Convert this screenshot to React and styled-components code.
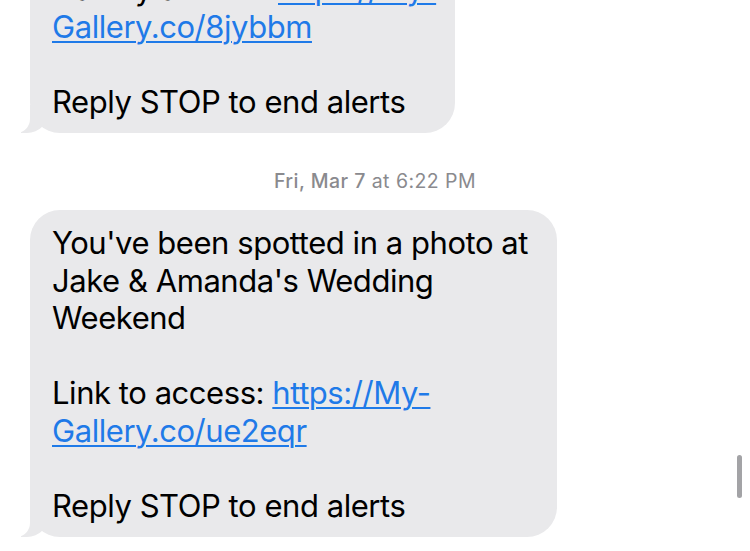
import React from "react";
import styled, { createGlobalStyle } from "styled-components";

const Global = createGlobalStyle`
  html, body {
    margin: 0;
    padding: 0;
    background: #ffffff;
    height: 551px;
    overflow: hidden;
  }
  body {
    font-family: Inter, "Noto Sans", "Liberation Sans", sans-serif;
    -webkit-font-smoothing: antialiased;
  }
`;

const Screen = styled.div`
  width: 750px;
  height: 551px;
  overflow: hidden;
  position: relative;
  background: #ffffff;
`;

const Thread = styled.div`
  display: flex;
  flex-direction: column;
  align-items: flex-start;
  padding: 0 0 0 30px;
  margin-top: -44px;
`;

const Bubble = styled.div`
  position: relative;
  box-sizing: border-box;
  width: ${(p) => p.$width}px;
  padding: 14px 0 13px 22px;
  background: #e9e9eb;
  border-radius: 30px;
  color: #000000;
  font-size: 31px;
  line-height: 37.5px;
  letter-spacing: -0.45px;
  white-space: nowrap;

  &::before {
    content: "";
    position: absolute;
    bottom: 0;
    left: -9px;
    width: 28px;
    height: 28px;
    background: #e9e9eb;
    border-bottom-right-radius: 22px;
  }
  &::after {
    content: "";
    position: absolute;
    bottom: 0;
    left: -34px;
    width: 34px;
    height: 28px;
    background: #ffffff;
    border-bottom-right-radius: 14px;
  }
`;

const Line = styled.div`
  position: relative;
  z-index: 1;
  min-height: 37.5px;
`;

const Link = styled.a`
  color: #1f7ae8;
  text-decoration: underline;
  text-decoration-thickness: 1.5px;
  text-underline-offset: 3px;
`;

const Stamp = styled.div`
  align-self: center;
  margin: 36px 0 17px -30px;
  font-size: 19.5px;
  line-height: 24px;
  color: #8a8a8e;
  letter-spacing: 0.45px;
`;

const StampDay = styled.span`
  font-weight: 500;
`;

const ScrollThumb = styled.div`
  position: absolute;
  right: 8px;
  top: 455px;
  width: 5px;
  height: 43px;
  border-radius: 3px;
  background: #a3a3a6;
`;

export default function App() {
  return (
    <Screen>
      <Global />
      <Thread>
        <Bubble $width={425}>
          <Line>
            Gallery access: <Link href="#">https://My-</Link>
          </Line>
          <Line>
            <Link href="#">Gallery.co/8jybbm</Link>
          </Line>
          <Line />
          <Line>Reply STOP to end alerts</Line>
        </Bubble>
        <Stamp>
          <StampDay>Fri, Mar 7</StampDay> at 6:22 PM
        </Stamp>
        <Bubble $width={527}>
          <Line>You've been spotted in a photo at</Line>
          <Line>Jake &amp; Amanda's Wedding</Line>
          <Line>Weekend</Line>
          <Line />
          <Line>
            Link to access: <Link href="#">https://My-</Link>
          </Line>
          <Line>
            <Link href="#">Gallery.co/ue2eqr</Link>
          </Line>
          <Line />
          <Line>Reply STOP to end alerts</Line>
        </Bubble>
      </Thread>
      <ScrollThumb />
    </Screen>
  );
}
